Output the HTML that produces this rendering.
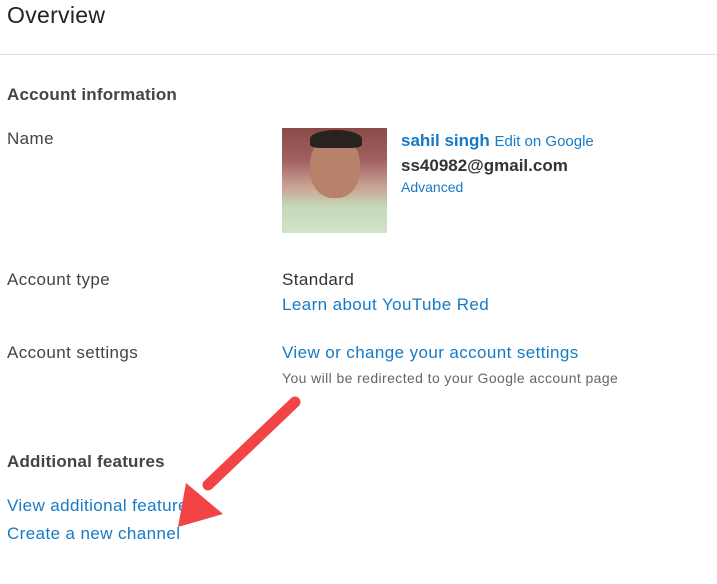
<!DOCTYPE html>
<html><head><style>
body{margin:0;width:717px;height:584px;background:#fff;font-family:"Liberation Sans",sans-serif;position:relative;overflow:hidden;color:#333}
.a{position:absolute;white-space:nowrap}
.b{color:#167ac6}
.t{font-size:17px;letter-spacing:0.4px}
</style></head><body>
<div class="a" style="left:7px;top:2px;font-size:23px;color:#222;letter-spacing:0.3px">Overview</div>
<div class="a" style="left:0;top:54px;width:717px;height:1px;background:#e2e2e2"></div>
<div class="a" style="left:7px;top:85px;font-size:17px;font-weight:bold;color:#444;letter-spacing:0.2px">Account information</div>
<div class="a t" style="left:7px;top:129px;color:#444">Name</div>
<div class="a" style="left:282px;top:128px;width:105px;height:105px;background:linear-gradient(180deg,#8a4a48 0%,#a06060 30%,#c8a090 55%,#c6d8b8 75%,#d2e2c8 100%)">
<div style="position:absolute;left:28px;top:8px;width:50px;height:62px;border-radius:45%;background:#b8826a"></div>
<div style="position:absolute;left:28px;top:2px;width:52px;height:18px;border-radius:50% 50% 20% 20%;background:#2a2220"></div>
</div>
<div class="a" style="left:401px;top:131px;font-size:17px"><b class="b">sahil singh</b> <span class="b" style="font-size:15px">Edit on Google</span></div>
<div class="a" style="left:401px;top:156px;font-size:17px;font-weight:bold;color:#333">ss40982@gmail.com</div>
<div class="a b" style="left:401px;top:179px;font-size:14px">Advanced</div>
<div class="a t" style="left:7px;top:270px;color:#444">Account type</div>
<div class="a t" style="left:282px;top:270px;color:#333">Standard</div>
<div class="a b t" style="left:282px;top:295px">Learn about YouTube Red</div>
<div class="a t" style="left:7px;top:343px;color:#444">Account settings</div>
<div class="a b t" style="left:282px;top:343px">View or change your account settings</div>
<div class="a" style="left:282px;top:370px;font-size:14px;color:#666;letter-spacing:0.4px">You will be redirected to your Google account page</div>
<div class="a" style="left:7px;top:452px;font-size:17px;font-weight:bold;color:#444;letter-spacing:0.2px">Additional features</div>
<div class="a b t" style="left:7px;top:496px">View additional features</div>
<div class="a b t" style="left:7px;top:524px">Create a new channel</div>
<svg class="a" style="left:0;top:0" width="717" height="584">
<line x1="295" y1="402" x2="208" y2="485" stroke="#f24444" stroke-width="11" stroke-linecap="round"/>
<polygon points="178,527 186,483 223,514" fill="#f24444"/>
</svg>
</body></html>
